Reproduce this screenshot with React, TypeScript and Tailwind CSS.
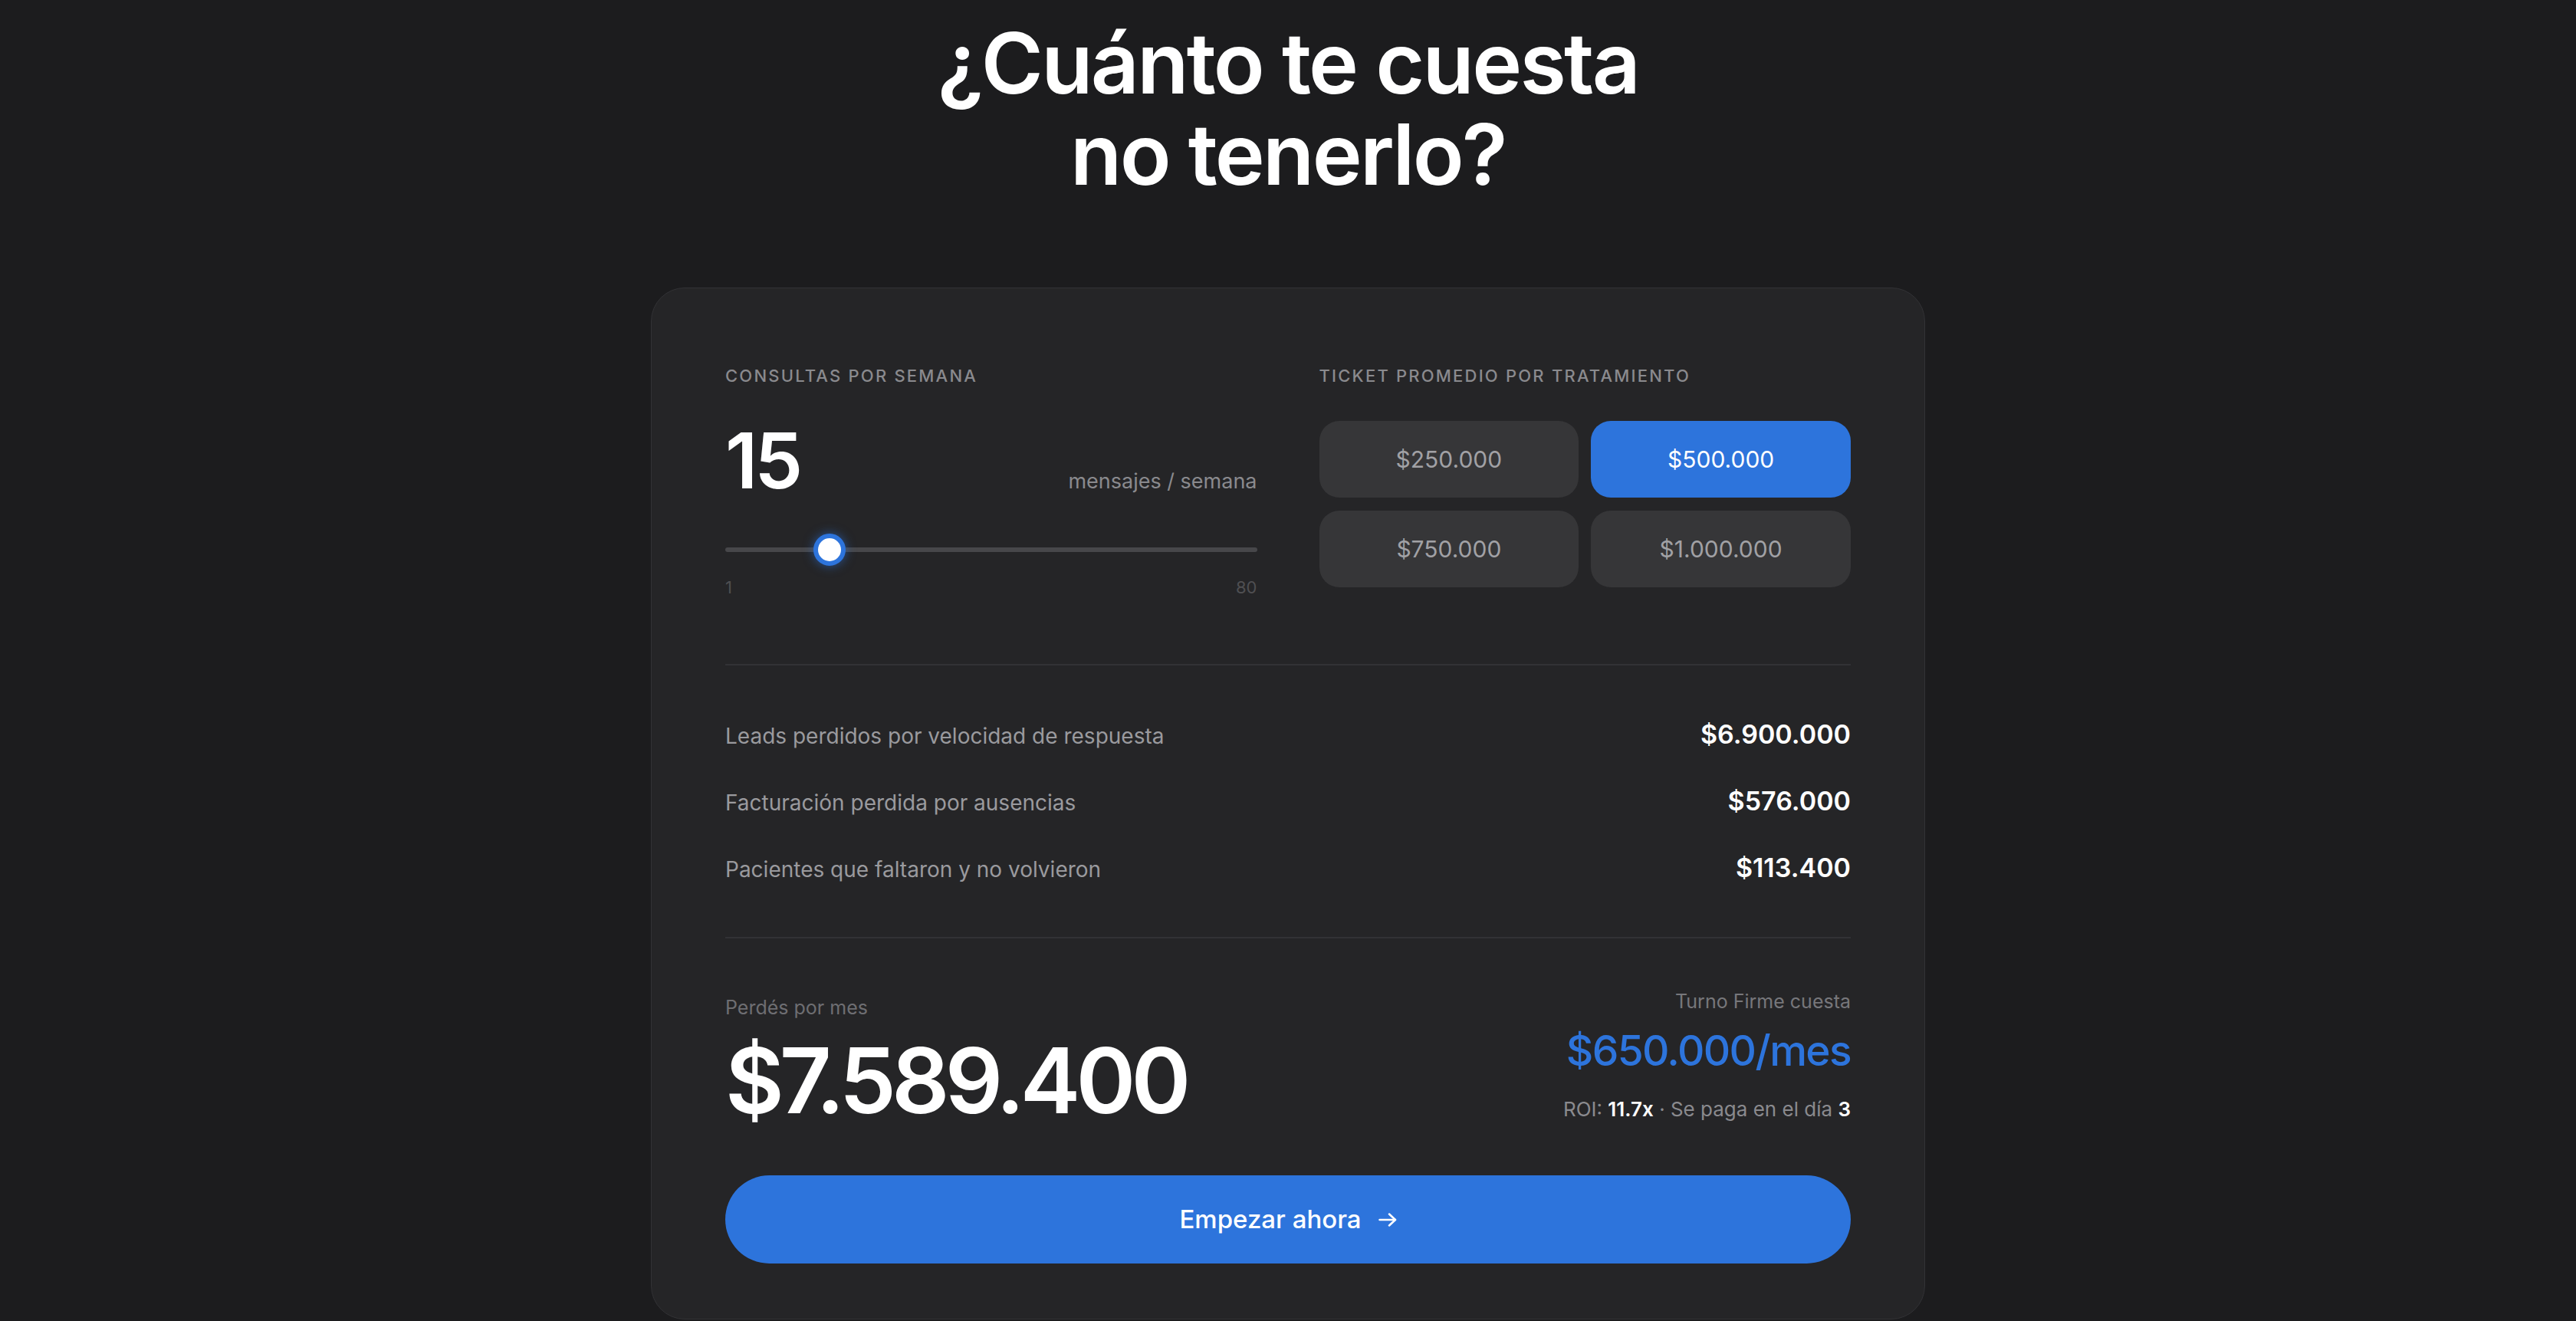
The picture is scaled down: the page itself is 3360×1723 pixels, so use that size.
import { useState } from 'react';

const TICKETS = [250000, 500000, 750000, 1000000];
const PRICE = 650000;

function money(n: number) {
  return '$' + Math.round(n).toString().replace(/\B(?=(\d{3})+(?!\d))/g, '.');
}

export default function App() {
  const [consultas, setConsultas] = useState(15);
  const [ticket, setTicket] = useState(500000);

  // perdidas mensuales estimadas
  const leads = consultas * 4.6 * 0.2 * ticket;
  const ausencias = consultas * ticket * 0.0768;
  const faltaron = consultas * ticket * 0.01512;
  const total = leads + ausencias + faltaron;
  const roi = (total / PRICE).toFixed(1);
  const dia = Math.ceil(PRICE / (total / 30));
  const pct = (consultas - 1) / 79;

  const rows = [
    { label: 'Leads perdidos por velocidad de respuesta', value: leads },
    { label: 'Facturación perdida por ausencias', value: ausencias },
    { label: 'Pacientes que faltaron y no volvieron', value: faltaron },
  ];

  return (
    <div className="min-h-screen bg-[#1c1c1e] pt-[23px] [font-family:Inter,sans-serif]">
      <h2 className="text-center text-[110px] leading-[119px] font-semibold tracking-[-0.025em] text-white">
        ¿Cuánto te cuesta
        <br />
        no tenerlo?
      </h2>

      <div className="mx-auto mt-[114px] w-[1662px] rounded-[44px] border border-[#323235] bg-[#252527] px-[96px] pt-[103px] pb-[72px]">
        <div className="grid grid-cols-2 gap-x-[81px]">
          <div>
            <div className="text-[22px] leading-[22px] font-medium uppercase tracking-[0.1em] text-[#8a8a8e]">
              Consultas por semana
            </div>
            <div className="mt-[50px] flex items-baseline justify-between">
              <span className="text-[100px] leading-none font-semibold tracking-[-0.04em] text-white">{consultas}</span>
              <span className="text-[27px] text-[#8a8a8e]">mensajes / semana</span>
            </div>
            <div className="relative mt-[45px] flex h-[42px] items-center">
              <div className="h-[6px] w-full rounded-full bg-[#47474a]" />
              <input
                type="range"
                min={1}
                max={80}
                value={consultas}
                onChange={(e) => setConsultas(Number(e.target.value))}
                className="absolute inset-0 h-full w-full cursor-pointer opacity-0"
              />
              <div
                className="pointer-events-none absolute top-0 h-[42px] w-[42px] rounded-full border-[6px] border-[#2d74dc] bg-white shadow-[0_0_14px_rgba(45,116,220,0.6)]"
                style={{ left: `calc((100% - 42px) * ${pct})` }}
              />
            </div>
            <div className="mt-[17px] flex justify-between text-[22px] leading-[22px] text-[#4f4f52]">
              <span>1</span>
              <span>80</span>
            </div>
          </div>

          <div>
            <div className="text-[22px] leading-[22px] font-medium uppercase tracking-[0.1em] text-[#8a8a8e]">
              Ticket promedio por tratamiento
            </div>
            <div className="mt-[48px] grid grid-cols-2 gap-x-[16px] gap-y-[17px]">
              {TICKETS.map((t) => {
                const active = t === ticket;
                return (
                  <button
                    type="button"
                    key={t}
                    onClick={() => setTicket(t)}
                    className={`h-[100px] rounded-[26px] text-[30px] ${active ? 'bg-[#2d74dc] text-white' : 'bg-[#363638] text-[#a1a1a5]'}`}
                  >
                    {money(t)}
                  </button>
                );
              })}
            </div>
          </div>
        </div>

        <div className="mt-[89px] h-[2px] bg-[#323235]" />

        <div className="mt-[46px]">
          {rows.map((r) => (
            <div key={r.label} className="flex h-[87px] items-baseline justify-between leading-[87px]">
              <span className="text-[28px] text-[#9a9a9e]">{r.label}</span>
              <span className="text-[34px] font-semibold text-white">{money(r.value)}</span>
            </div>
          ))}
        </div>

        <div className="mt-[47px] h-[2px] bg-[#323235]" />

        <div className="mt-[67px] flex items-start justify-between">
          <div className="pt-[8px]">
            <div className="text-[25px] leading-[30px] text-[#6e6e72]">Perdés por mes</div>
            <div className="mt-[21px] text-[118px] leading-none font-semibold tracking-[-0.05em] text-white">{money(total)}</div>
          </div>
          <div className="text-right">
            <div className="text-[25px] leading-[30px] text-[#77777b]">Turno Firme cuesta</div>
            <div className="mt-[22px] text-[55px] leading-none font-medium tracking-[-0.03em] text-[#2d74dc]">{money(PRICE)}/mes</div>
            <div className="mt-[34px] text-[26px] leading-[30px] text-[#8a8a8e]">
              ROI: <span className="font-semibold text-white">{roi}x</span> · Se paga en el día{' '}
              <span className="font-semibold text-white">{dia}</span>
            </div>
          </div>
        </div>

        <button
          type="button"
          className="mt-[65px] flex h-[115px] w-full items-center justify-center gap-[22px] rounded-full bg-[#2d74dc] text-[33px] font-medium text-white"
        >
          Empezar ahora
          <svg width="24" height="18" viewBox="0 0 24 18" fill="none" stroke="currentColor" strokeWidth="2.5" strokeLinecap="round" strokeLinejoin="round">
            <path d="M1.5 9H22" />
            <path d="M14 1.5L22 9l-8 7.5" />
          </svg>
        </button>
      </div>
    </div>
  );
}
